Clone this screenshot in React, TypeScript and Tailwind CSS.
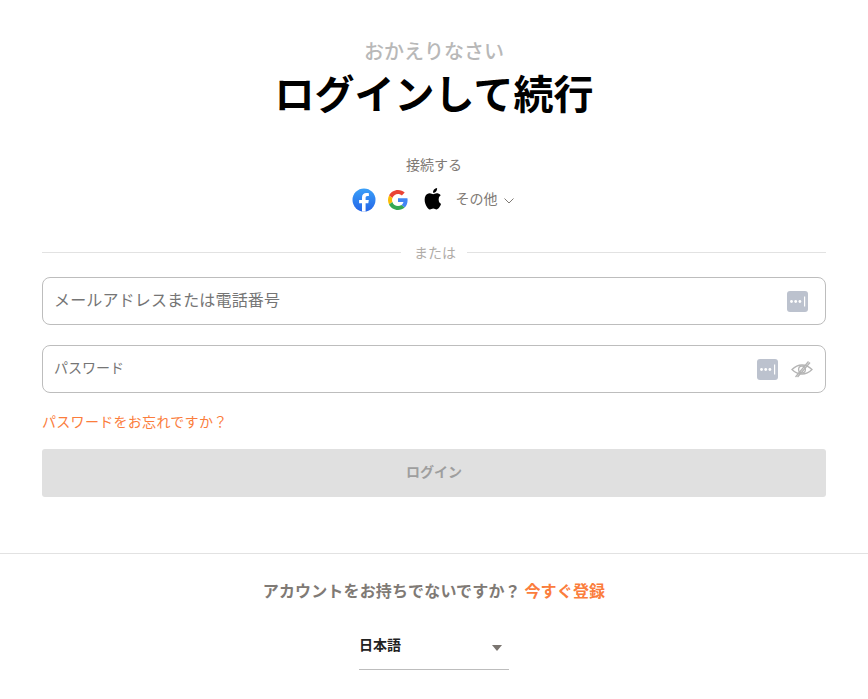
const KeyIcon = () => (
  <svg width="21" height="21" viewBox="0 0 21 21" className="shrink-0">
    <rect width="21" height="21" rx="3" fill="#bcc2ce" />
    <circle cx="4.500" cy="10.500" r="1.400" fill="#fff" />
    <circle cx="8.700" cy="10.500" r="1.400" fill="#fff" />
    <circle cx="12.900" cy="10.500" r="1.400" fill="#fff" />
    <rect x="17" y="5.500" width="1.200" height="10" fill="#fff" />
  </svg>
);

const EyeOff = () => (
  <svg width="22" height="18" viewBox="0 0 22 18" fill="none" stroke="#b4b4b4" strokeWidth="1.300" className="shrink-0">
    <path d="M1 9.500c3-3 6-4.500 10-4.500s7 1.500 10 4.500c-3 3-6 4.500-10 4.500s-7-1.500-10-4.500z" />
    <circle cx="11" cy="9.500" r="3.400" />
    <path d="M4.500 17 17.500 1.500" />
    <path d="M6.500 17 19 2.500" />
  </svg>
);

const FacebookIcon = () => (
  <svg width="24" height="24" viewBox="0 0 24 24">
    <defs>
      <linearGradient id="fb" x1="0" y1="0" x2="0" y2="1">
        <stop offset="0" stopColor="#3aa0f8" />
        <stop offset="1" stopColor="#2465e8" />
      </linearGradient>
    </defs>
    <circle cx="12" cy="12" r="11.500" fill="url(#fb)" />
    <path d="M16.300 15.300l.5-3.300h-3.200V9.900c0-.9.400-1.800 1.900-1.800h1.400V5.300s-1.300-.2-2.600-.2c-2.600 0-4.300 1.600-4.300 4.400V12H7.100v3.300H10v8.100c.6.100 1.200.1 1.800.1s1.200 0 1.800-.1v-8.100h2.700z" fill="#fff" />
  </svg>
);

const GoogleIcon = () => (
  <svg width="20" height="20" viewBox="0 0 48 48">
    <path fill="#ea4335" d="M24 9.500c3.500 0 6.700 1.200 9.200 3.600l6.900-6.900C35.900 2.400 30.500 0 24 0 14.600 0 6.500 5.400 2.600 13.200l8 6.200C12.400 13.700 17.700 9.500 24 9.500z" />
    <path fill="#4285f4" d="M47 24.500c0-1.600-.1-3.100-.4-4.500H24v9h13c-.6 3-2.300 5.500-4.800 7.200l7.700 6C44.300 38.100 47 31.900 47 24.500z" />
    <path fill="#fbbc05" d="M10.500 28.600c-.5-1.400-.8-3-.8-4.600s.3-3.200.8-4.600l-8-6.200C.9 16.500 0 20.100 0 24s.9 7.500 2.600 10.800l7.900-6.200z" />
    <path fill="#34a853" d="M24 48c6.500 0 11.900-2.100 15.900-5.800l-7.700-6c-2.200 1.500-4.900 2.300-8.200 2.300-6.300 0-11.600-4.200-13.500-9.900l-8 6.200C6.500 42.600 14.600 48 24 48z" />
  </svg>
);

const AppleIcon = () => (
  <svg width="17" height="22" viewBox="3.300 2.100 16.500 20.400" preserveAspectRatio="none">
    <path
      fill="#000"
      d="M17.500 12.700c0-2.500 2-3.700 2.100-3.800-1.200-1.700-3-1.900-3.600-2-1.500-.2-3 .9-3.800.9s-2-.9-3.300-.9c-1.700 0-3.300 1-4.100 2.500-1.800 3.100-.5 7.600 1.200 10.100.8 1.200 1.800 2.600 3.100 2.500 1.200 0 1.700-.8 3.200-.8s1.900.8 3.200.8c1.300 0 2.200-1.200 3-2.400.9-1.400 1.300-2.700 1.400-2.800-.1 0-2.400-1-2.400-4.100zM15 5.300c.7-.8 1.100-2 1-3.200-1 0-2.200.7-2.900 1.500-.6.700-1.200 1.900-1 3 1.100.1 2.200-.5 2.900-1.300z"
    />
  </svg>
);

export default function App() {
  return (
    <div className="w-[868px] h-[699px] overflow-hidden bg-white font-['Noto_Sans_CJK_JP','Noto_Sans',sans-serif]">
      <div className="px-[42px] pt-[38px]">
        <div className="text-center text-[20px] leading-[26px] font-medium text-[#b8b8b8]">おかえりなさい</div>
        <h1 className="-mt-px text-center text-[40px] leading-[58px] font-bold text-black">ログインして続行</h1>

        <div className="mt-[33px] text-center text-[14px] leading-[20px] text-[#7f7a75]">接続する</div>
        <div className="mt-[14px] flex h-[24px] items-center justify-center pr-[3px]">
          <FacebookIcon />
          <div className="ml-[12px]"><GoogleIcon /></div>
          <div className="ml-[16px] mb-[2px]"><AppleIcon /></div>
          <span className="ml-[15px] mb-[4px] text-[14px] text-[#7f7a75]">その他</span>
          <svg width="10" height="6" viewBox="0 0 10 6" fill="none" stroke="#7f7a75" className="ml-[6px] mt-[1px]">
            <path d="M.5.500 5 5 9.500.500" />
          </svg>
        </div>

        <div className="mt-[31px] flex items-center">
          <div className="h-px flex-1 bg-[#e2e2e2]" />
          <span className="pl-[13px] pr-[11px] text-[14px] leading-[18px] text-[#b0aca8]">または</span>
          <div className="h-px flex-1 bg-[#e2e2e2]" />
        </div>

        <div className="mt-[16px] flex h-[48px] items-center rounded-[8px] border border-[#bdbdbd] pl-[11px] pr-[17px]">
          <span className="mb-[4px] flex-1 text-[16px] tracking-[0.15px] text-[#757575]">メールアドレスまたは電話番号</span>
          <KeyIcon />
        </div>

        <div className="mt-[20px] flex h-[48px] items-center gap-[13px] rounded-[8px] border border-[#bdbdbd] pl-[11px] pr-[12px]">
          <span className="mb-[4px] flex-1 text-[14px] text-[#757575]">パスワード</span>
          <KeyIcon />
          <EyeOff />
        </div>

        <div className="mt-[19px] text-[14px] leading-[18px] tracking-[0.3px] text-[#fb7d3c]">パスワードをお忘れですか？</div>

        <div className="mt-[19px] flex h-[48px] items-center justify-center rounded-[3px] bg-[#e0e0e0] pb-[4px] text-[14px] font-bold text-[#9e9e9e]">ログイン</div>
      </div>

      <div className="mt-[56px] border-t border-[#e2e2e2] pt-[25px] text-center text-[16px] leading-[22px] font-bold tracking-[0.15px] text-[#7f7a75]">
        アカウントをお持ちでないですか？ <span className="text-[#fb7d3c]">今すぐ登録</span>
      </div>

      <div className="mx-auto mt-[14px] flex h-[55px] w-[150px] items-center justify-between border-b border-[#bdbdbd] pt-[4px] pr-[7px]">
        <span className="text-[14px] font-bold text-[#222]">日本語</span>
        <svg width="10" height="6" viewBox="0 0 10 6" className="mt-[7px]"><path d="M0 0h10L5 6z" fill="#7a7570" /></svg>
      </div>
    </div>
  );
}
